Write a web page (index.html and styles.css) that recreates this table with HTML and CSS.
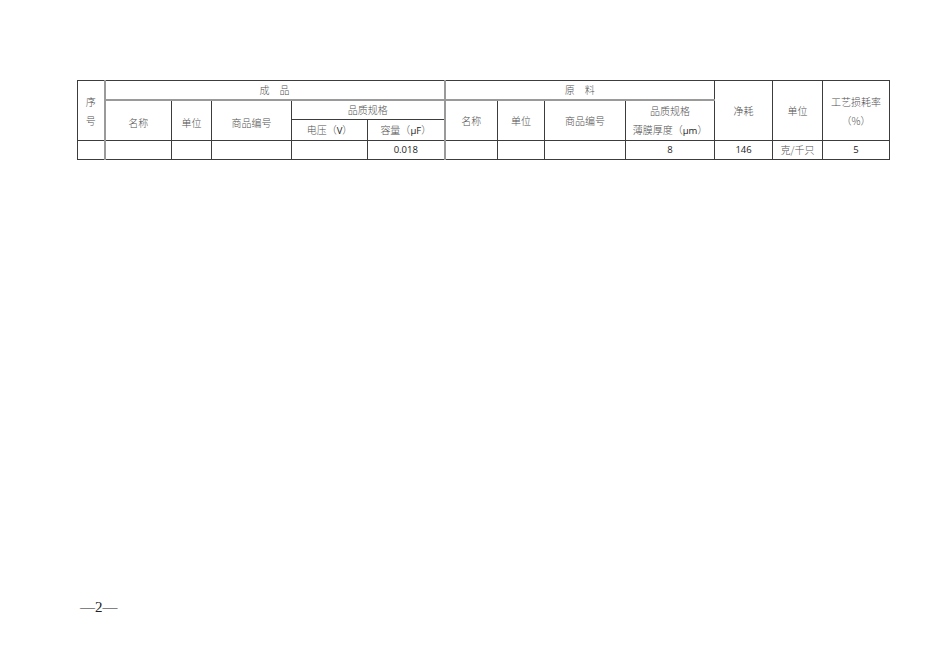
FILE: index.html
```html
<!DOCTYPE html>
<html lang="zh">
<head>
<meta charset="utf-8">
<link rel="stylesheet" href="styles.css">
</head>
<body>
<div class="page">
  <table class="grid">
    <colgroup>
      <col class="c27"><col class="c67"><col class="c40"><col class="c80"><col class="c76"><col class="c77">
      <col class="c53"><col class="c47"><col class="c81"><col class="c89"><col class="c58"><col class="c50"><col class="c67">
    </colgroup>
    <tr class="r1">
      <td rowspan="3" class="thick-r two">序<br>号</td>
      <td colspan="5" class="thick-b thick-r">成　品</td>
      <td colspan="4" class="thick-b">原　料</td>
      <td rowspan="3">净耗</td>
      <td rowspan="3">单位</td>
      <td rowspan="3" class="two">工艺损耗率<br>（%）</td>
    </tr>
    <tr class="r2">
      <td rowspan="2" class="low">名称</td>
      <td rowspan="2" class="low">单位</td>
      <td rowspan="2" class="low">商品编号</td>
      <td colspan="2" class="thick-r">品质规格</td>
      <td rowspan="2">名称</td>
      <td rowspan="2">单位</td>
      <td rowspan="2">商品编号</td>
      <td rowspan="2" class="two">品质规格<br>薄膜厚度（<span class="num">μm</span>）</td>
    </tr>
    <tr class="r3">
      <td>电压（<span class="num">V</span>）</td>
      <td class="thick-r">容量（<span class="num">μF</span>）</td>
    </tr>
    <tr class="r4">
      <td class="thick-r"></td>
      <td></td>
      <td></td>
      <td></td>
      <td></td>
      <td class="thick-r num">0.018</td>
      <td></td>
      <td></td>
      <td></td>
      <td class="num">8</td>
      <td class="num">146</td>
      <td>克/千只</td>
      <td class="num">5</td>
    </tr>
  </table>
  <div class="folio">—2—</div>
</div>
</body>
</html>
```

FILE: styles.css
```css
html, body {
  margin: 0;
  padding: 0;
  background: #ffffff;
}
.page {
  width: 950px;
  height: 672px;
  box-sizing: border-box;
  padding: 80px 0 0 77px;
}
.grid {
  border-collapse: collapse;
  table-layout: fixed;
  width: 813px;
  font-family: "Noto Sans CJK SC", "Noto Sans", sans-serif;
  font-weight: 300;
  font-size: 10px;
  color: #505050;
}
.c27 { width: 27px; }
.c67 { width: 67px; }
.c40 { width: 40px; }
.c80 { width: 80px; }
.c76 { width: 76px; }
.c77 { width: 77px; }
.c53 { width: 53px; }
.c47 { width: 47px; }
.c81 { width: 81px; }
.c89 { width: 89px; }
.c58 { width: 58px; }
.c50 { width: 50px; }
.grid td {
  border: 1px solid #3c3c3c;
  padding: 0;
  text-align: center;
  vertical-align: middle;
  line-height: 14px;
  white-space: nowrap;
  overflow: hidden;
}
.grid .r1 td { height: 18px; }
.grid .r2 td { height: 18px; }
.grid .r3 td { height: 19px; }
.grid .r4 td { height: 18px; }
.grid td.two { line-height: 19px; }
.grid td.low { padding-top: 4px; }
.grid td.thick-r { border-right: 2px solid #9a9a9a; }
.grid td.thick-b { border-bottom: 2px solid #9a9a9a; }
.num {
  font-family: "Open Sans", "Liberation Sans", sans-serif;
  font-weight: 400;
  font-size: 9.5px;
  color: #222;
}
.folio {
  margin: 438px 0 0 3px;
  font-family: "Liberation Serif", serif;
  font-size: 15px;
  color: #222;
  line-height: 18px;
}
```
